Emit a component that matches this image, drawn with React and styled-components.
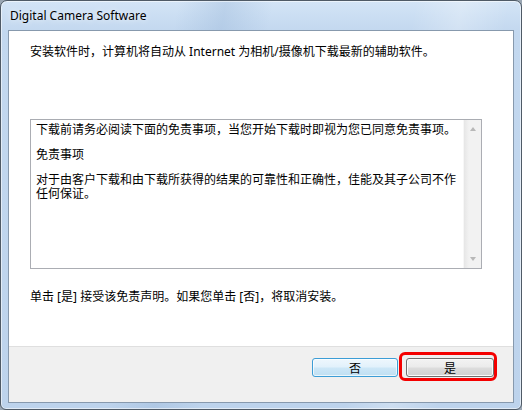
import React from "react";
import styled, { createGlobalStyle } from "styled-components";

const Global = createGlobalStyle`
  html, body { margin: 0; padding: 0; }
  body {
    width: 522px; height: 410px; overflow: hidden;
    background: #9aa6b3;
    font-family: "Noto Sans", "Noto Sans CJK SC", sans-serif;
  }
`;

const Window = styled.div`
  box-sizing: border-box;
  width: 522px;
  height: 410px;
  border: 1px solid #4f5a66;
  border-radius: 7px 7px 6px 6px;
  box-shadow: inset 0 0 0 1px rgba(255,255,255,0.55);
  background:
    linear-gradient(100deg, transparent 0 30%, rgba(150,180,215,0.35) 38%, transparent 46%, transparent 70%, rgba(255,255,255,0.25) 78%, transparent 86%),
    linear-gradient(to bottom, #d3e4f6 0px, #c3d8ef 30px, #bdd3ec 100%);
  display: flex;
  flex-direction: column;
  padding: 0 7px 6px 7px;
`;

const TitleBar = styled.div`
  height: 29px;
  display: flex;
  align-items: center;
  padding-left: 2px;
  font-family: "Noto Sans", "Open Sans", sans-serif;
  font-size: 12px;
  color: #000;
  text-shadow: 0 0 6px rgba(255,255,255,0.9);
`;

const Client = styled.div`
  flex: 1;
  display: flex;
  flex-direction: column;
  border: 1px solid #8799ad;
  background: #f0f0f0;
  font-family: "Noto Sans", "Noto Sans CJK SC", sans-serif;
  font-size: 12px;
  color: #000;
`;

const Body = styled.div`
  height: 316px;
  box-sizing: border-box;
  background: #fff;
  border-bottom: 1px solid #dfdfdf;
  padding: 14px 31px 0 21px;
  display: flex;
  flex-direction: column;
`;

const Line = styled.div`
  line-height: 14px;
  height: 14px;
  white-space: nowrap;
  margin-top: ${p => p.$mt || 0}px;
`;

const TextBox = styled.div`
  margin-top: 60px;
  height: 150px;
  box-sizing: border-box;
  border: 1px solid #abadb3;
  border-top-color: #a9acb2;
  display: flex;
  background: #fff;
`;

const TextContent = styled.div`
  flex: 1;
  padding: 3px 4px 0 5px;
  line-height: 14px;
  overflow: hidden;
`;

const Para = styled.p`
  margin: 0 0 11px 0;
`;

const ScrollBar = styled.div`
  width: 17px;
  background: linear-gradient(to right, #e6e6e6, #f2f2f2 30%, #f2f2f2);
  border-left: 1px solid #f7f7f7;
  display: flex;
  flex-direction: column;
  justify-content: space-between;
  align-items: center;
  padding: 7px 0 7px;
`;

const Arrow = styled.div`
  width: 0; height: 0;
  border-left: 3.5px solid transparent;
  border-right: 3.5px solid transparent;
  ${p => p.$down
    ? "border-top: 4px solid #b8b8b8;"
    : "border-bottom: 4px solid #b8b8b8;"}
`;

const Footer = styled.div`
  flex: 1;
  display: flex;
  justify-content: flex-end;
  align-items: flex-start;
  gap: 8px;
  padding: 11px 19px 0 0;
`;

const ButtonWrap = styled.div`
  position: relative;
`;

const Button = styled.button`
  box-sizing: border-box;
  width: ${p => p.$w}px;
  height: 19px;
  padding: 0;
  margin: 0;
  font-family: "Noto Sans CJK SC", sans-serif;
  font-size: 12px;
  line-height: 17px;
  color: #000;
  border-radius: 3px;
  border: 1px solid ${p => (p.$focus ? "#3c9dd6" : "#707070")};
  box-shadow: inset 0 0 0 1px ${p => (p.$focus ? "rgba(255,255,255,0.7)" : "#fbfbfb")};
  background: ${p =>
    p.$focus
      ? "linear-gradient(to bottom, #eef7fd 0%, #e1f1fb 48%, #cde7f7 52%, #bfdff2 100%)"
      : "linear-gradient(to bottom, #f3f3f3 0%, #ebebeb 48%, #dddddd 52%, #d0d0d0 100%)"};
`;

const Highlight = styled.div`
  position: absolute;
  left: -7px; right: -3px; top: -6px; bottom: -4px;
  border: 3px solid #f40000;
  border-radius: 6px;
  pointer-events: none;
`;

export default function App() {
  return (
    <>
      <Global />
      <Window>
        <TitleBar>Digital Camera Software</TitleBar>
        <Client>
          <Body>
            <Line>安装软件时，计算机将自动从 Internet 为相机/摄像机下载最新的辅助软件。</Line>
            <TextBox>
              <TextContent>
                <Para>下载前请务必阅读下面的免责事项，当您开始下载时即视为您已同意免责事项。</Para>
                <Para>免责事项</Para>
                <Para>对于由客户下载和由下载所获得的结果的可靠性和正确性，佳能及其子公司不作任何保证。</Para>
              </TextContent>
              <ScrollBar>
                <Arrow />
                <Arrow $down />
              </ScrollBar>
            </TextBox>
            <Line $mt={21}>单击 [是] 接受该免责声明。如果您单击 [否]，将取消安装。</Line>
          </Body>
          <Footer>
            <ButtonWrap>
              <Button $w={86} $focus>否</Button>
            </ButtonWrap>
            <ButtonWrap>
              <Button $w={88}>是</Button>
              <Highlight />
            </ButtonWrap>
          </Footer>
        </Client>
      </Window>
    </>
  );
}
